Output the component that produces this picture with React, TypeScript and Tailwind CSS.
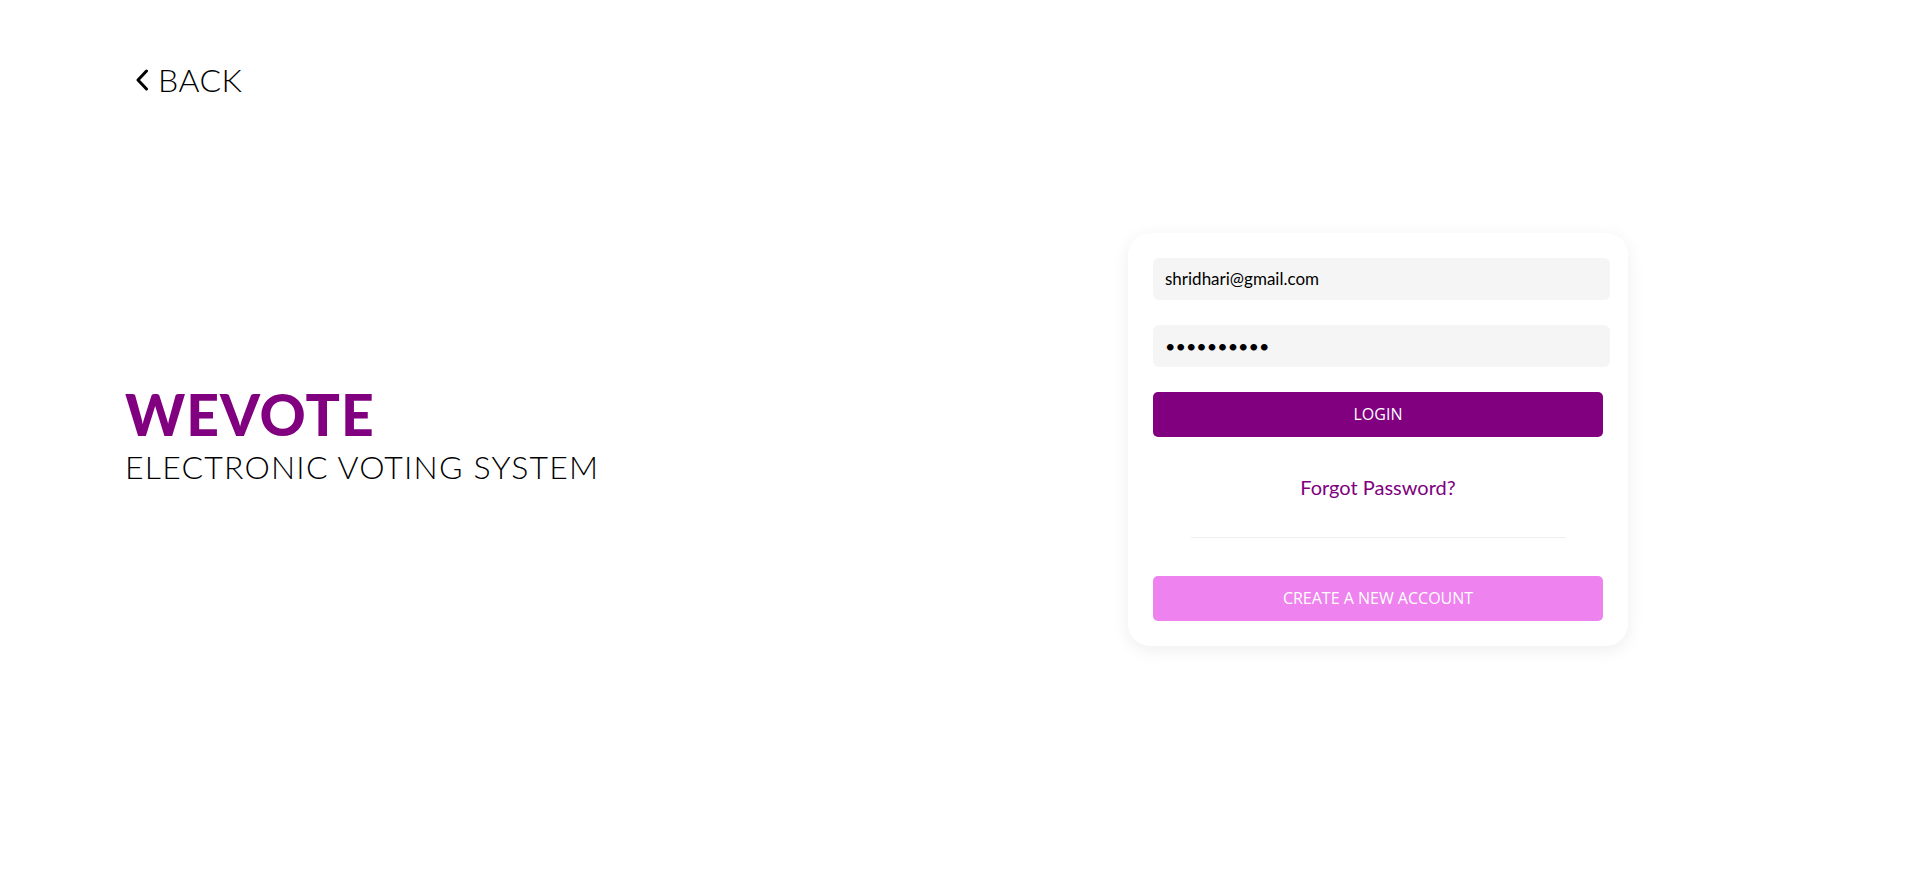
import React from 'react';

// Login page — WeVote electronic voting system

const PURPLE = '#800080';

function BackLink() {
  return (
    <a href="#" className="flex items-center gap-[9px] text-black no-underline">
      <svg width="14" height="22" viewBox="0 0 14 22" fill="none" className="shrink-0">
        <path d="M11.5 2 L3 11 L11.5 20" stroke="#000" strokeWidth="3" strokeLinecap="round" strokeLinejoin="round" />
      </svg>
      <span className="text-[32px] font-light leading-none tracking-[0.5px]">BACK</span>
    </a>
  );
}

function LoginCard() {
  return (
    <div className="w-[500px] rounded-[22px] bg-white px-[25px] py-[25px] shadow-[0_4px_18px_rgba(0,0,0,0.07)]">
      <input
        type="email"
        readOnly
        value="shridhari@gmail.com"
        className="block h-[42px] w-[457px] rounded-[6px] bg-[#f5f5f5] px-[12px] text-[17px] text-black outline-none"
      />
      <input
        type="password"
        readOnly
        value="1234567890"
        className="mt-[25px] block h-[42px] w-[457px] rounded-[6px] bg-[#f5f5f5] px-[12px] text-[18px] text-black outline-none"
      />
      <button
        type="button"
        className="mt-[25px] block h-[45px] w-[450px] rounded-[5px] bg-[#800080] text-[16px] text-white"
        style={{ fontFamily: '"Open Sans", sans-serif' }}
      >
        LOGIN
      </button>
      <div className="mt-[38px] text-center text-[20px] leading-[24px] text-[#800080]">
        <a href="#" className="no-underline" style={{ color: PURPLE }}>Forgot Password?</a>
      </div>
      <div className="mx-auto mt-[38px] h-px w-[375px] bg-[#eeeeee]" />
      <button
        type="button"
        className="mt-[38px] block h-[45px] w-[450px] rounded-[5px] bg-[#ee82ee] text-[16px] text-white"
        style={{ fontFamily: '"Open Sans", sans-serif' }}
      >
        CREATE A NEW ACCOUNT
      </button>
    </div>
  );
}

export default function App() {
  return (
    <div
      className="grid h-screen grid-rows-[160px_1fr_160px] bg-white"
      style={{ fontFamily: 'Lato, "Open Sans", sans-serif' }}
    >
      <header className="pl-[135px] pt-[64px]">
        <BackLink />
      </header>

      <main className="flex items-center justify-between pl-[125px] pr-[292px]">
        <div className="pb-[10px]">
          <h1 className="text-[57px] font-black leading-none tracking-[1px] text-[#800080]">WEVOTE</h1>
          <p className="mt-[8px] text-[32px] font-light leading-none tracking-[1.2px] text-black">ELECTRONIC VOTING SYSTEM</p>
        </div>
        <LoginCard />
      </main>

      <div />
    </div>
  );
}
